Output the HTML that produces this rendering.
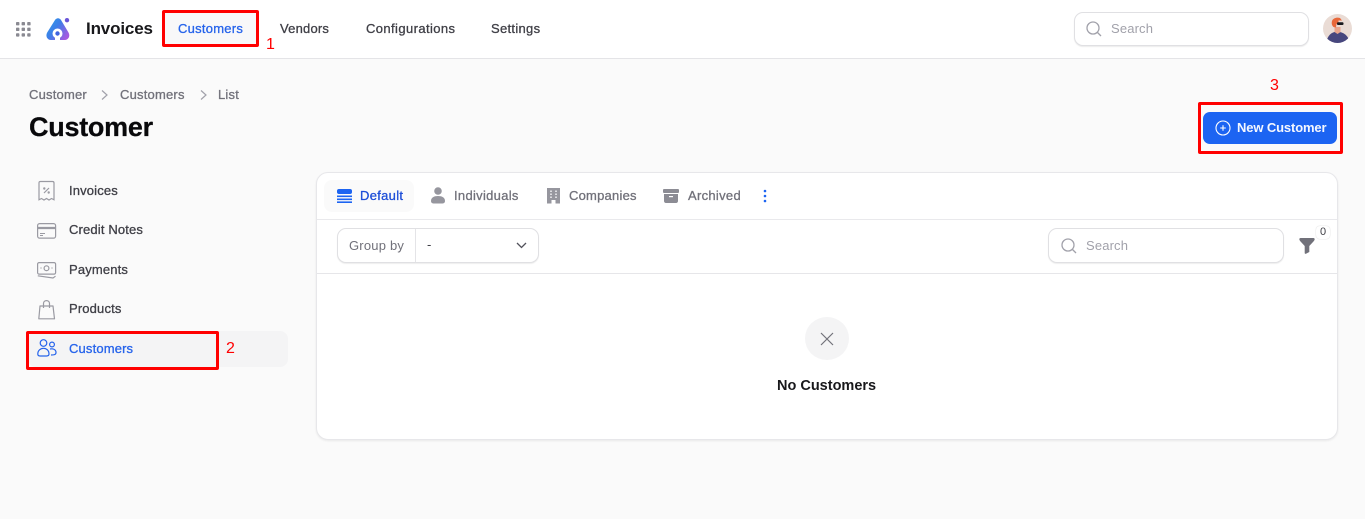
<!DOCTYPE html>
<html lang="en"><head><meta charset="utf-8"><title>Customer</title>
<style>
*{box-sizing:border-box}
html,body{margin:0;padding:0}
body{width:1365px;height:519px;background:#fafafa;font-family:"Liberation Sans",sans-serif;position:relative;overflow:hidden}
.a{position:absolute;white-space:nowrap}
.t{position:absolute;white-space:nowrap;font-size:13px;line-height:16px;-webkit-text-stroke:.3px currentColor}
svg{position:absolute;overflow:visible}
.red{position:absolute;border:3px solid #f00;border-radius:2px}
.rn{position:absolute;color:#f00;font-size:16px;line-height:18px}
</style></head><body>
<div class="a" style="left:0;top:0;width:1365px;height:59px;background:#fff;border-bottom:1px solid #e4e4e7"></div>
<svg style="left:16px;top:22px" width="15" height="15" fill="#8a8a92"><rect x="0" y="0" width="3.400" height="3.400" rx=".8"/><rect x="5.600" y="0" width="3.400" height="3.400" rx=".8"/><rect x="11.200" y="0" width="3.400" height="3.400" rx=".8"/><rect x="0" y="5.600" width="3.400" height="3.400" rx=".8"/><rect x="5.600" y="5.600" width="3.400" height="3.400" rx=".8"/><rect x="11.200" y="5.600" width="3.400" height="3.400" rx=".8"/><rect x="0" y="11.200" width="3.400" height="3.400" rx=".8"/><rect x="5.600" y="11.200" width="3.400" height="3.400" rx=".8"/><rect x="11.200" y="11.200" width="3.400" height="3.400" rx=".8"/></svg>
<svg style="left:46px;top:17px" width="25" height="24" viewBox="0 0 25 24"><defs><linearGradient id="g" x1="0" y1="0" x2="1" y2="0.7"><stop offset="0" stop-color="#2aa0ea"/><stop offset=".5" stop-color="#3f7de8"/><stop offset="1" stop-color="#a55ae0"/></linearGradient></defs><path d="M9 3C10.500 .6 13.500 .6 15 3L22.500 15.500C24.500 19 22.500 23 18.500 23H5C1.200 23-.8 19 1.200 15.500Z" fill="url(#g)"/><circle cx="11.500" cy="16.500" r="5" fill="#fff"/><rect x="9" y="20" width="5" height="3" fill="#fff"/><circle cx="11.500" cy="16.500" r="2.200" fill="#3f63e0"/><circle cx="21" cy="3.200" r="2.200" fill="#6a55d8"/></svg>
<div class="a" style="left:86px;top:18px;font-size:17px;line-height:21px;font-weight:700;color:#18181b;letter-spacing:-.15px">Invoices</div>
<div class="a" style="left:165px;top:13px;width:91px;height:32px;background:#f8f8f9"></div>
<div class="t" style="left:178px;top:21px;color:#2563eb;letter-spacing:.25px">Customers</div>
<div class="t" style="left:280px;top:21px;color:#3f3f46;letter-spacing:.2px">Vendors</div>
<div class="t" style="left:366px;top:21px;color:#3f3f46;letter-spacing:.4px">Configurations</div>
<div class="t" style="left:491px;top:21px;color:#3f3f46;letter-spacing:.3px">Settings</div>
<div class="a" style="left:1074px;top:12px;width:235px;height:34px;background:#fff;border:1px solid #e0e0e3;border-radius:9px;box-shadow:0 1px 1px rgba(0,0,0,.08)"></div>
<svg style="left:1086px;top:21px" width="16" height="16" fill="none" stroke="#a1a1aa" stroke-width="1.300"><circle cx="7" cy="7" r="6"/><path d="M11.500 11.500L15 15"/></svg>
<div class="a" style="left:1111px;top:21px;font-size:13px;line-height:16px;color:#a1a1aa;letter-spacing:.15px">Search</div>
<svg style="left:1323px;top:14px" width="29" height="29" viewBox="0 0 29 29"><defs><clipPath id="c"><circle cx="14.500" cy="14.500" r="14.500"/></clipPath></defs><circle cx="14.500" cy="14.500" r="14.500" fill="#eadcd5"/><g clip-path="url(#c)"><path d="M3 30C4 22 8 18 14 17.500C21 18 26 22 27 30Z" fill="#47477e"/><path d="M11.500 13H17.500V18L14.500 20L11.500 18Z" fill="#e9a58c"/><path d="M9 7C10 4 14 3 17 4L19 6.500H15.500V9L13.500 10L13 13.500L10.500 13C8.500 11 8.500 9 9 7Z" fill="#e8683a"/><rect x="14" y="8.300" width="6.500" height="2.700" rx="1" fill="#1a1a1e"/></g></svg>

<div class="t" style="left:29px;top:87px;color:#71717a;letter-spacing:.2px">Customer</div>
<svg style="left:101px;top:90px" width="7" height="10" fill="none" stroke="#a1a1aa" stroke-width="1.200"><path d="M1 .5L6 5L1 9.500"/></svg>
<div class="t" style="left:120px;top:87px;color:#71717a;letter-spacing:.2px">Customers</div>
<svg style="left:200px;top:90px" width="7" height="10" fill="none" stroke="#a1a1aa" stroke-width="1.200"><path d="M1 .5L6 5L1 9.500"/></svg>
<div class="t" style="left:218px;top:87px;color:#71717a;letter-spacing:.2px">List</div>
<div class="a" style="left:29px;top:111px;font-size:27px;line-height:33px;font-weight:700;color:#09090b;letter-spacing:-.27px;-webkit-text-stroke:.25px #09090b">Customer</div>

<div class="a" style="left:1203px;top:112px;width:134px;height:32px;background:#1c64f2;border-radius:7px"></div>
<svg style="left:1215px;top:120px" width="16" height="16" fill="none" stroke="#fff" stroke-width="1.100"><circle cx="8" cy="8" r="7"/><path d="M8 5.200V10.800M5.200 8H10.800"/></svg>
<div class="a" style="left:1237px;top:120px;font-size:13px;line-height:16px;font-weight:700;color:#f4f7ff;letter-spacing:-.13px">New Customer</div>

<svg style="left:38px;top:181px" width="17" height="20" fill="none" stroke="#9a9aa2" stroke-width="1.200"><path d="M1 2C1 1 1.500.5 2.500.5H14.500C15.500.5 16 1 16 2V18.800L13.500 17.500L11 19L8.500 17.500L6 19L3.500 17.500L1 18.800Z"/><path d="M6 12L11 7"/><circle cx="6.300" cy="7.500" r=".6"/><circle cx="10.700" cy="11.500" r=".6"/></svg>
<div class="t" style="left:69px;top:183px;color:#3f3f46;letter-spacing:.15px">Invoices</div>
<svg style="left:37px;top:223px" width="20" height="16" fill="none" stroke="#9a9aa2" stroke-width="1.200"><rect x=".6" y=".6" width="18" height="14.500" rx="2"/><path d="M.5 5H18.500" stroke-width="2.200"/><path d="M3 10.500H8M3 12.500H6" stroke-width="1"/></svg>
<div class="t" style="left:69px;top:222px;color:#3f3f46;letter-spacing:.15px">Credit Notes</div>
<svg style="left:37px;top:262px" width="20" height="17" fill="none" stroke="#9a9aa2" stroke-width="1.200"><rect x=".6" y=".6" width="18" height="11.500" rx="1.500"/><circle cx="9.500" cy="6.200" r="2.400"/><path d="M3.500 6H4.500M14.500 6H15.500"/><path d="M.8 13.800L16 16L18.500 14.200"/></svg>
<div class="t" style="left:69px;top:262px;color:#3f3f46;letter-spacing:.15px">Payments</div>
<svg style="left:38px;top:300px" width="18" height="20" fill="none" stroke="#9a9aa2" stroke-width="1.200"><path d="M2 6H15L16.500 18.800H.8Z" stroke-linejoin="round"/><path d="M5.500 8V3.500C5.500 1.500 7 .6 8.500 .6C10 .6 11.500 1.500 11.500 3.500V8"/></svg>
<div class="t" style="left:69px;top:301px;color:#3f3f46;letter-spacing:.15px">Products</div>
<div class="a" style="left:28px;top:331px;width:260px;height:36px;background:#f4f4f5;border-radius:8px"></div>
<svg style="left:37px;top:339px" width="20" height="18" fill="none" stroke="#2563eb" stroke-width="1.200"><circle cx="6.500" cy="4" r="3.300"/><circle cx="15" cy="5.500" r="2.400"/><path d="M.8 15C.8 11.500 3.500 9.300 6.500 9.300C9.500 9.300 12 11.500 12 15C12 16.500 11 17 9.500 17H3C1.500 17 .8 16.300 .8 15Z"/><path d="M13 10C16 9.300 19 10.500 19 13.500C19 15.500 17.500 16 14 16"/></svg>
<div class="t" style="left:69px;top:341px;color:#2563eb;letter-spacing:.15px">Customers</div>

<div class="a" style="left:316px;top:172px;width:1022px;height:268px;background:#fff;border:1px solid #e7e7ea;border-radius:12px;box-shadow:0 1px 2px rgba(0,0,0,.07)"></div>
<div class="a" style="left:317px;top:219px;width:1020px;height:1px;background:#e9e9ec"></div>
<div class="a" style="left:317px;top:273px;width:1020px;height:1px;background:#e6e6e9"></div>
<div class="a" style="left:324px;top:180px;width:90px;height:32px;background:#fafafa;border-radius:8px"></div>
<svg style="left:337px;top:189px" width="15" height="14" fill="#1c64f2"><rect x="0" y="0" width="15" height="5" rx="2"/><rect x="0" y="6.500" width="15" height="1.600"/><rect x="0" y="9.500" width="15" height="1.600"/><rect x="0" y="12.400" width="15" height="1.600"/></svg>
<div class="t" style="left:360px;top:188px;color:#1d4ed8;letter-spacing:.3px">Default</div>
<svg style="left:431px;top:187px" width="14" height="17" fill="#96969e"><circle cx="7" cy="4" r="3.800"/><path d="M0 14C0 10.500 3 9 7 9C11 9 14 10.500 14 14C14 16 12.500 16.500 11 16.500H3C1.500 16.500 0 16 0 14Z"/></svg>
<div class="t" style="left:454px;top:188px;color:#71717a;letter-spacing:.3px">Individuals</div>
<svg style="left:547px;top:188px" width="13" height="16"><path d="M0 0H13V15.500H8.500V12H4.500V15.500H0Z" fill="#96969e"/><g fill="#dcdce0"><rect x="3" y="2.500" width="2" height="1.500"/><rect x="8" y="2.500" width="2" height="1.500"/><rect x="3" y="5.500" width="2" height="1.500"/><rect x="8" y="5.500" width="2" height="1.500"/><rect x="3" y="8.500" width="2" height="1.500"/><rect x="8" y="8.500" width="2" height="1.500"/></g></svg>
<div class="t" style="left:569px;top:188px;color:#71717a;letter-spacing:.22px">Companies</div>
<svg style="left:663px;top:189px" width="16" height="14"><rect x="0" y="0" width="16" height="4" rx="1" fill="#8c8c94"/><path d="M1 5H15V12C15 13 14.300 14 13 14H3C1.700 14 1 13 1 12Z" fill="#8c8c94"/><rect x="6" y="7" width="4" height="1.200" fill="#fff"/></svg>
<div class="t" style="left:688px;top:188px;color:#71717a;letter-spacing:.3px">Archived</div>
<svg style="left:763px;top:189px" width="4" height="14" fill="#1c64f2"><circle cx="2" cy="2" r="1.300"/><circle cx="2" cy="7" r="1.300"/><circle cx="2" cy="12" r="1.300"/></svg>

<div class="a" style="left:337px;top:228px;width:202px;height:35px;background:#fff;border:1px solid #e0e0e3;border-radius:9px;box-shadow:0 1px 1px rgba(0,0,0,.07)"></div>
<div class="a" style="left:415px;top:229px;width:1px;height:33px;background:#e4e4e7"></div>
<div class="a" style="left:349px;top:238px;font-size:13px;line-height:16px;color:#71717a;letter-spacing:.2px">Group by</div>
<div class="a" style="left:427px;top:237px;font-size:13px;line-height:16px;color:#3f3f46">-</div>
<svg style="left:516px;top:242px" width="11" height="7" fill="none" stroke="#52525b" stroke-width="1.300"><path d="M1 1L5.500 5.500L10 1"/></svg>

<div class="a" style="left:1048px;top:228px;width:236px;height:35px;background:#fff;border:1px solid #e0e0e3;border-radius:9px;box-shadow:0 1px 1px rgba(0,0,0,.07)"></div>
<svg style="left:1061px;top:238px" width="16" height="16" fill="none" stroke="#a1a1aa" stroke-width="1.300"><circle cx="7" cy="7" r="6"/><path d="M11.500 11.500L15 15"/></svg>
<div class="a" style="left:1086px;top:238px;font-size:13px;line-height:16px;color:#a1a1aa;letter-spacing:.15px">Search</div>
<svg style="left:1299px;top:238px" width="16" height="16"><path d="M.3 1C.3.500 1 0 1.500 0H14.500C15 0 15.700.500 15.700 1C15.700 2 15 3 14 4L10.300 8V14L7 15.800C6.300 16 5.700 15.700 5.700 15V8L2 4C1 3 .3 2 .3 1Z" fill="#71717a"/></svg>
<div class="a" style="left:1316px;top:226px;width:14px;height:13px;background:#fff;border-radius:4px;box-shadow:0 0 1px rgba(0,0,0,.25)"></div>
<div class="a" style="left:1316px;top:225px;width:14px;text-align:center;font-size:11px;line-height:14px;color:#3f3f46">0</div>

<div class="a" style="left:805px;top:317px;width:44px;height:43px;background:#f4f4f5;border-radius:50%"></div>
<svg style="left:820px;top:332px" width="14" height="14" fill="none" stroke="#71717a" stroke-width="1.200"><path d="M1 1L13 13M13 1L1 13"/></svg>
<div class="a" style="left:777px;top:377px;font-size:14.500px;line-height:18px;font-weight:700;color:#18181b">No Customers</div>

<div class="red" style="left:162px;top:10px;width:97px;height:37px"></div>
<div class="rn" style="left:266px;top:36px">1</div>
<div class="red" style="left:26px;top:331px;width:193px;height:39px"></div>
<div class="rn" style="left:226px;top:340px">2</div>
<div class="red" style="left:1198px;top:102px;width:145px;height:52px"></div>
<div class="rn" style="left:1270px;top:77px">3</div>
</body></html>
